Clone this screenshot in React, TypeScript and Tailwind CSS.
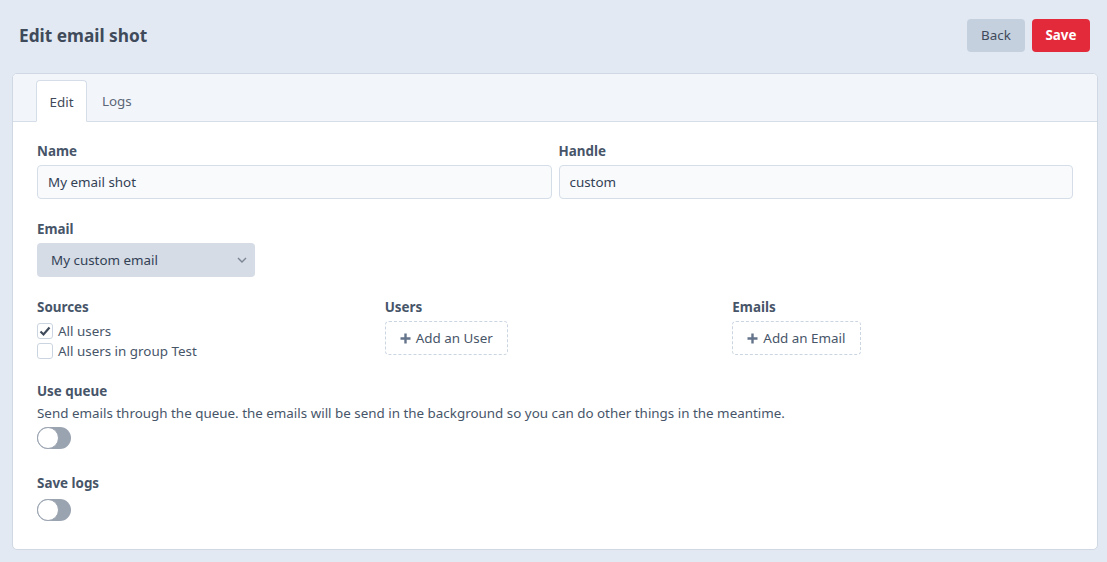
import React from "react";

const font = { fontFamily: '"Noto Sans", "Open Sans", sans-serif' };

function Toggle() {
  return (
    <div className="relative w-[34px] h-[22px] rounded-full bg-[#9aa3b0]">
      <div className="absolute left-0 top-0 w-[22px] h-[22px] rounded-full bg-white border border-[#9aa3b0]" />
    </div>
  );
}

function Check({ checked, label }: { checked?: boolean; label: string }) {
  return (
    <div className="flex items-center gap-[5px] h-[20px]">
      <div className="w-[16px] h-[16px] rounded-[3px] border border-[#cbd5e1] bg-white flex items-center justify-center">
        {checked && (
          <svg width="12" height="12" viewBox="0 0 12 12">
            <path d="M1.5 6.5 L4.5 9.5 L10.5 2.5" stroke="#3f4a5a" strokeWidth="2.2" fill="none" />
          </svg>
        )}
      </div>
      <span className="text-[13.4px] text-[#475569]">{label}</span>
    </div>
  );
}

function AddButton({ label }: { label: string }) {
  return (
    <div className="inline-flex items-center gap-[5px] h-[34px] px-[14px] border border-dashed border-[#cbd5e1] rounded-[4px] text-[13.4px] text-[#475569] self-start">
      <svg width="11" height="11" viewBox="0 0 11 11">
        <path d="M5.5 0.5 V10.5 M0.5 5.5 H10.5" stroke="#64748b" strokeWidth="2.4" />
      </svg>
      {label}
    </div>
  );
}

const labelCls = "text-[13.4px] font-bold text-[#475569] leading-[20px]";

export default function App() {
  return (
    <div className="min-h-[562px] bg-[#e2e9f3] pl-[12px] pr-[9px] pt-[17px] pb-[13px] text-[#475569]" style={font}>
      <div className="flex items-center justify-between pl-[7px] pr-[8px] h-[36px]">
        <h1 className="text-[17.3px] font-bold text-[#3f4a5a] pt-[2px]">Edit email shot</h1>
        <div className="flex gap-[7px] pt-[1px]">
          <button className="h-[33px] w-[58px] rounded-[4px] bg-[#c5d0de] text-[13.4px] text-[#3f4a5a]">Back</button>
          <button className="h-[33px] w-[58px] rounded-[4px] bg-[#e32a3a] text-[13.4px] font-bold text-white">Save</button>
        </div>
      </div>
      <div className="mt-[20px] bg-white border border-[#cfd8e3] rounded-[5px] overflow-hidden">
        <div className="bg-[#f2f6fb] border-b border-[#d5dde8] h-[48px] flex items-end pl-[23px]">
          <div className="h-[42px] w-[51px] -mb-px pt-[2px] bg-white border border-[#d5dde8] border-b-white rounded-t-[4px] flex items-center justify-center text-[13.4px] text-[#3f4a5a]">
            Edit
          </div>
          <div className="h-[42px] pt-[2px] px-[15px] flex items-center text-[13.4px] text-[#5b6676]">Logs</div>
        </div>
        <div className="px-[24px] pt-[19px] pb-[28px]">
          <div className="grid grid-cols-2 gap-[7px]">
            <div>
              <div className={labelCls}>Name</div>
              <div className="mt-[4px] h-[34px] border border-[#d5dde8] rounded-[4px] bg-[#f8fafc] px-[10px] flex items-center text-[13.4px] text-[#334155]">My email shot</div>
            </div>
            <div>
              <div className={labelCls}>Handle</div>
              <div className="mt-[4px] h-[34px] border border-[#d5dde8] rounded-[4px] bg-[#f8fafc] px-[10px] flex items-center text-[13.4px] text-[#334155]">custom</div>
            </div>
          </div>
          <div className="mt-[20px]">
            <div className={labelCls}>Email</div>
            <div className="mt-[4px] h-[34px] w-[218px] rounded-[4px] bg-[#d5dce6] pl-[14px] pr-[8px] flex items-center justify-between text-[13.4px] text-[#334155]">
              <span>My custom email</span>
              <svg width="10" height="6" viewBox="0 0 10 6">
                <path d="M1 1 L5 5 L9 1" stroke="#7b8594" strokeWidth="1.4" fill="none" />
              </svg>
            </div>
          </div>
          <div className="mt-[20px] grid grid-cols-3 gap-[7px]">
            <div className="flex flex-col">
              <div className={labelCls}>Sources</div>
              <div className="mt-[4px]">
                <Check checked label="All users" />
                <Check label="All users in group Test" />
              </div>
            </div>
            <div className="flex flex-col">
              <div className={labelCls}>Users</div>
              <div className="mt-[4px] flex"><AddButton label="Add an User" /></div>
            </div>
            <div className="flex flex-col">
              <div className={labelCls}>Emails</div>
              <div className="mt-[4px] flex"><AddButton label="Add an Email" /></div>
            </div>
          </div>
          <div className="mt-[20px]">
            <div className={labelCls}>Use queue</div>
            <div className="mt-[2px] text-[13.4px] text-[#475569] leading-[20px]">
              Send emails through the queue. the emails will be send in the background so you can do other things in the meantime.
            </div>
            <div className="mt-[4px]"><Toggle /></div>
          </div>
          <div className="mt-[24px]">
            <div className={labelCls}>Save logs</div>
            <div className="mt-[6px]"><Toggle /></div>
          </div>
        </div>
      </div>
    </div>
  );
}
